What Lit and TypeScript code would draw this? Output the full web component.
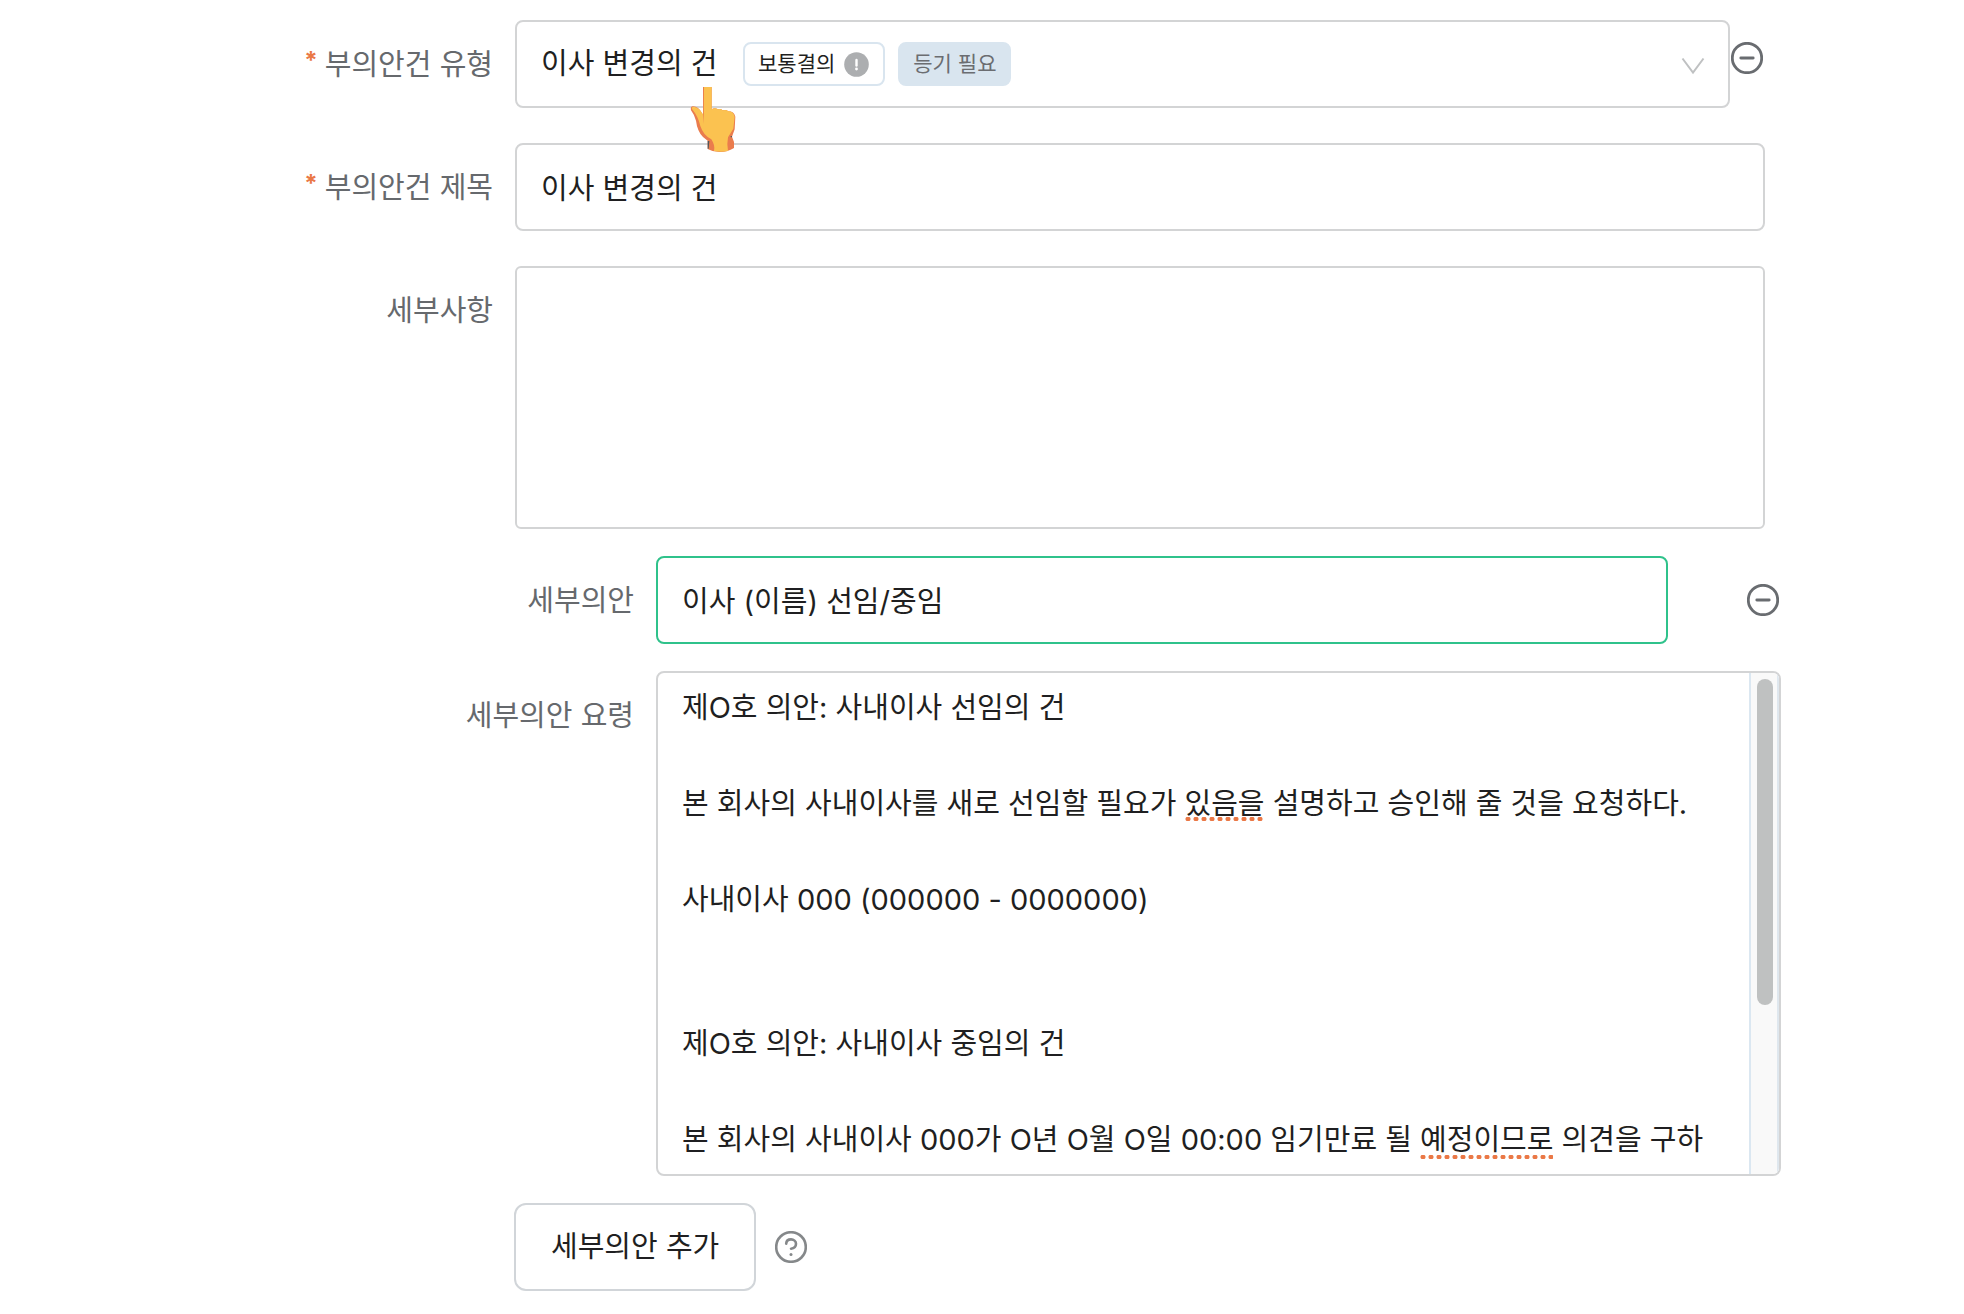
import { LitElement, html, css, svg } from "lit";
import { customElement } from "lit/decorators.js";

const PROCEDURE_TEXT = `제O호 의안: 사내이사 선임의 건

본 회사의 사내이사를 새로 선임할 필요가 있음을 설명하고 승인해 줄 것을 요청하다.

사내이사 000 (000000 - 0000000)


제O호 의안: 사내이사 중임의 건

본 회사의 사내이사 000가 O년 O월 O일 00:00 임기만료 될 예정이므로 의견을 구하`;

const minusIcon = html`<svg class="icon" viewBox="0 0 32 32" aria-hidden="true">
  ${svg`<circle cx="16" cy="16" r="14.7" /><path d="M9.8 16h12.4" />`}
</svg>`;

@customElement("app-root")
export class AppRoot extends LitElement {
  static styles = css`
    :host {
      display: block;
      min-height: 100vh;
      background: #fff;
      color: #1f1f21;
      font-family: Inter, "Noto Sans CJK KR", sans-serif;
      font-size: 29px;
      line-height: 48px;
    }
    * {
      box-sizing: border-box;
    }
    .form {
      position: relative;
      display: flex;
      flex-direction: column;
      gap: 27px;
      padding: 20px 183px 23px 0;
    }
    .main {
      display: flex;
      flex-direction: column;
      gap: 35px;
      padding-right: 16px;
    }
    .row {
      display: grid;
      grid-template-columns: 493px minmax(0, 1fr);
      column-gap: 22px;
      align-items: start;
    }
    .row.nested {
      grid-template-columns: 634px minmax(0, 1fr);
    }
    .label {
      display: flex;
      justify-content: flex-end;
      gap: 7px;
      height: 88px;
      color: #66696d;
      line-height: 90px;
    }
    .star {
      color: #ea7846;
      font-size: 24px;
      font-weight: 700;
      line-height: 82px;
    }
    .line {
      display: flex;
      align-items: center;
    }
    .control {
      display: block;
      width: 100%;
      min-width: 0;
      height: 88px;
      margin: 0;
      padding: 0 24px 3px;
      border: 2px solid #d3d4d5;
      border-radius: 8px;
      outline: none;
      background: #fff;
      color: inherit;
      font: inherit;
      appearance: none;
      resize: none;
    }
    .control.active {
      border-color: #2fc28b;
    }
    .control.details {
      height: 263px;
      border-radius: 6px;
    }
    .select-box {
      flex: 1;
      display: grid;
      align-items: center;
    }
    .select-box > * {
      grid-area: 1 / 1;
    }
    .select-box .control {
      padding-bottom: 0;
    }
    .tags {
      display: flex;
      gap: 13px;
      margin-left: 228px;
      pointer-events: none;
      font-size: 21px;
      line-height: 40px;
    }
    .tag {
      display: flex;
      align-items: center;
      gap: 9px;
      padding: 0 14px 0 13px;
      border: 2px solid #d9e5ef;
      border-radius: 8px;
    }
    .tag.filled {
      padding: 0 13px;
      background: #d9e5ef;
      color: #6b6d71;
    }
    .info {
      width: 25px;
      height: 25px;
    }
    .chevron {
      justify-self: end;
      width: 24px;
      height: 18px;
      margin-right: 25px;
      margin-top: 4px;
      fill: none;
      stroke: #bfc1c2;
      stroke-width: 2;
      pointer-events: none;
    }
    .icon {
      display: block;
      width: 32px;
      height: 32px;
      fill: none;
      stroke: #696c70;
      stroke-width: 2.8;
      stroke-linecap: round;
    }
    .icon-button {
      flex: none;
      padding: 0;
      border: 0;
      background: none;
      cursor: pointer;
    }
    .icon-button.remove {
      margin: 0 2px 13px 1px;
    }
    .line.split {
      justify-content: space-between;
      gap: 79px;
      padding-right: 2px;
    }
    .memo {
      position: relative;
      display: flex;
      height: 505px;
      overflow: hidden;
      border: 2px solid #d3d4d5;
      border-radius: 8px;
    }
    .memo-text {
      flex: 1;
      min-width: 0;
      height: 100%;
      margin: 0;
      padding: 11px 20px 0 24px;
      border: 0;
      outline: none;
      background: none;
      color: inherit;
      font: inherit;
      resize: none;
      overflow: hidden;
    }
    .track {
      flex: none;
      width: 30px;
      padding: 6px 4px 0 6px;
      border-left: 2px solid #dbe7f1;
      border-right: 2px solid #dfe7ee;
      background: #f9f9f9;
    }
    .thumb {
      width: 16px;
      height: 326px;
      border-radius: 8px;
      background: #bfc1c1;
    }
    .spelling {
      position: absolute;
      height: 4px;
      background: radial-gradient(circle at 4px 2px, #ea7846 2px, transparent 3px) 0 0 / 8px 4px;
      pointer-events: none;
    }
    .spelling.first {
      left: 526px;
      top: 144px;
      width: 80px;
    }
    .spelling.second {
      left: 761px;
      top: 482px;
      width: 134px;
    }
    .actions {
      display: flex;
      align-items: center;
      gap: 19px;
      padding-left: 514px;
    }
    .add {
      height: 88px;
      padding: 0 35px;
      border: 2px solid #d1d5d9;
      border-radius: 12px;
      background: #fff;
      color: inherit;
      font: inherit;
      cursor: pointer;
    }
    .help {
      stroke: #85888a;
      stroke-width: 2.6;
    }
    .pointer {
      position: absolute;
      left: 690px;
      top: 86px;
      width: 47px;
      height: 67px;
      pointer-events: none;
    }
  `;

  render() {
    return html`
      <form class="form">
        <div class="main">
          <div class="row">
            <label class="label" for="type"><span class="star">*</span>부의안건 유형</label>
            <div class="line">
              <div class="select-box">
                <select class="control" id="type">
                  <option>이사 변경의 건</option>
                </select>
                <div class="tags">
                  <span class="tag">
                    보통결의
                    <svg class="info" viewBox="0 0 25 25" aria-hidden="true">
                      <circle cx="12.5" cy="12.5" r="12.3" fill="#acaeb0" />
                      <path d="M12.5 8v5.5" stroke="#fff" stroke-width="2.4" stroke-linecap="round" />
                      <circle cx="12.5" cy="17" r="1.4" fill="#fff" />
                    </svg>
                  </span>
                  <span class="tag filled">등기 필요</span>
                </div>
                <svg class="chevron" viewBox="0 0 24 18" aria-hidden="true">
                  <path d="M1.5 1.5 12 15.5 22.5 1.5" />
                </svg>
              </div>
              <button class="icon-button remove" type="button" aria-label="안건 삭제">${minusIcon}</button>
            </div>
          </div>
          <div class="row">
            <label class="label" for="title"><span class="star">*</span>부의안건 제목</label>
            <input class="control" id="title" type="text" value="이사 변경의 건" />
          </div>
          <div class="row">
            <label class="label" for="details">세부사항</label>
            <textarea class="control details" id="details"></textarea>
          </div>
        </div>

        <div class="row nested">
          <label class="label" for="item">세부의안</label>
          <div class="line split">
            <input class="control active" id="item" type="text" value="이사 (이름) 선임/중임" />
            <button class="icon-button" type="button" aria-label="세부의안 삭제">${minusIcon}</button>
          </div>
        </div>

        <div class="row nested">
          <label class="label" for="memo">세부의안 요령</label>
          <div class="memo">
            <textarea class="memo-text" id="memo" spellcheck="false" .value=${PROCEDURE_TEXT}></textarea>
            <span class="spelling first"></span>
            <span class="spelling second"></span>
            <div class="track"><div class="thumb"></div></div>
          </div>
        </div>

        <div class="actions">
          <button class="add" type="button">세부의안 추가</button>
          <button class="icon-button" type="button" aria-label="도움말">
            <svg class="icon help" viewBox="0 0 32 32" aria-hidden="true">
              <circle cx="16" cy="16" r="14.8" />
              <path d="M11.2 12.6C11.4 9.8 13.4 8.4 16 8.4c2.8 0 5 1.8 5 4.4 0 3.2-2.4 4.6-5 4.9" />
              <circle cx="16" cy="23.4" r="1.5" fill="#85888a" stroke="none" />
            </svg>
          </button>
        </div>

        <svg class="pointer" viewBox="150 48 141 201" aria-hidden="true">
          <path
            fill="#ea7c4d"
            d="M189 51H215V118Q224 112 234 118Q242 115 248 121Q258 118 265 124Q282 124 286 140L284 178L276 200L282 216V234Q262 246 242 246Q220 247 203 237V212L189 201Q172 184 168 152Q163 134 153 121Q150 110 159 109Q176 110 185 128L189 134Z"
          />
          <path
            fill="#fbc250"
            d="M192 51H215V118Q224 112 234 118Q242 115 248 121Q258 118 265 124Q280 124 284 140L280 176L264 202Q260 222 264 243Q242 247 222 243Q226 226 214 208Q190 196 181 168Q174 138 156 117Q154 111 161 110Q178 112 189 133L191 161Z"
          />
          <path fill="#50575c" d="M203 213H208L206 236H203ZM272 198H276V202H272Z" />
        </svg>
      </form>
    `;
  }
}
